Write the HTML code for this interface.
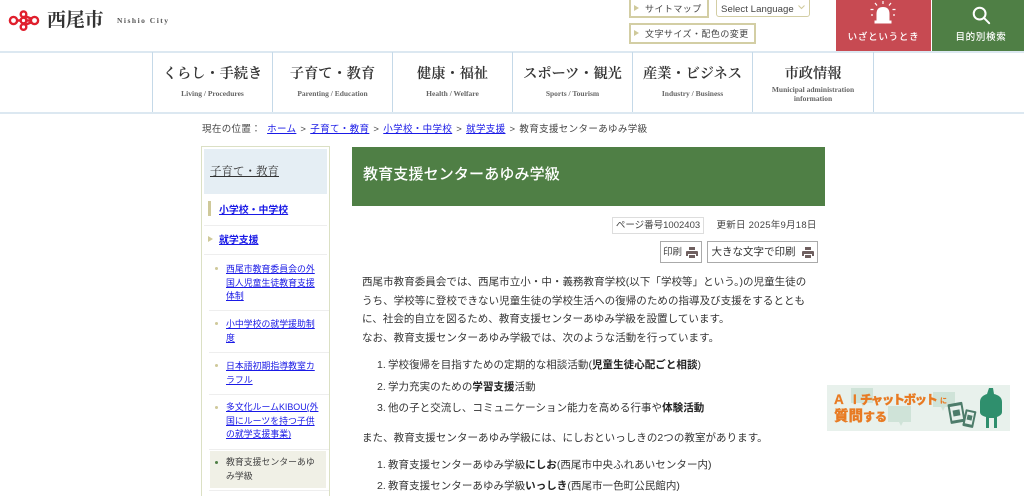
<!DOCTYPE html>
<html lang="ja"><head><meta charset="utf-8"><title>教育支援センターあゆみ学級</title>
<style>
html,body{margin:0;padding:0;background:#fff}
body{width:1024px;height:496px;overflow:hidden;position:relative;font-family:"Liberation Sans","Noto Sans CJK JP",sans-serif;color:#333}
#w{position:absolute;left:0;top:0;width:1024px;height:496px;overflow:hidden;filter:blur(.3px)}
.a{position:absolute;white-space:nowrap}
.serif{font-family:"Liberation Serif","Noto Serif CJK JP",serif}
.nav{position:absolute;top:52px;height:60px;text-align:center;border-right:1px solid #c5d9e8;box-sizing:border-box;color:#333}
.nav b{display:block;font-weight:600;font-size:14.2px;position:absolute;left:0;right:0;top:11px;line-height:22px;white-space:nowrap;-webkit-text-stroke:.1px #333}
.nav i{display:block;font-style:normal;font-size:7.5px;position:absolute;left:0;right:0;top:36px;line-height:12px;font-weight:700;color:#666}
.btn{position:absolute;box-sizing:border-box;border:2px solid #d3cea4;background:#fff;font-size:9px;color:#444;letter-spacing:.45px;white-space:nowrap;line-height:16px}
.tri{position:absolute;width:0;height:0;border-left:5px solid #cfc99a;border-top:3px solid transparent;border-bottom:3px solid transparent}
a{color:#1a1ae6}
.sep{margin:0 1px}
.sd{position:absolute;left:201px;top:146px;width:129px;height:360px;box-sizing:border-box;border:1px solid #dbe0c4;border-bottom:0}
.l{position:absolute;left:226px;white-space:nowrap;font-size:8.9px;line-height:13.7px}
.dot{position:absolute;left:215px;width:3px;height:3px;background:#cfc99a;border-radius:50%}
.hr{position:absolute;left:209px;width:120px;height:1px;background:#eee}
.p{position:absolute;left:362px;font-size:10.5px;line-height:19px;white-space:nowrap;color:#333;letter-spacing:.05px}
.n{position:absolute;left:377px;font-size:10.5px;line-height:19px;color:#333}
.p b{color:#222}
.li{left:388px}
</style></head><body><div id="w">
<svg class="a" style="left:8px;top:10px" width="32" height="22" viewBox="0 0 32 22" fill="none" stroke="#e01f2d" stroke-width="2.4">
<circle cx="5.500" cy="10.500" r="3.600"/><circle cx="26.500" cy="10.500" r="3.600"/><circle cx="15.500" cy="4.200" r="2.800"/><circle cx="15.500" cy="17" r="2.800"/><circle cx="15.500" cy="10.500" r="2.800"/><path d="M9 10.500H13M18 10.500H23M18 6.500L23 8.500M18 14.500L23 12.500"/></svg>
<div class="a serif" style="left:47px;top:8px;font-size:19px;line-height:26px;font-weight:700;color:#333;letter-spacing:-.2px">西尾市</div>
<div class="a serif" style="left:117px;top:15px;font-size:7.500px;line-height:12px;font-weight:700;color:#555;letter-spacing:1.5px">Nishio City</div>

<div class="btn" style="left:629px;top:-3px;width:80px;height:21px;padding:2px 0 0 14px"><span class="tri" style="left:3px;top:6px"></span>サイトマップ</div>
<div class="btn" style="left:716px;top:-3px;width:94px;height:20px;border-radius:3px;padding:4px 0 0 4px;letter-spacing:.05px;font-size:9.600px;border-width:1.500px">Select Language
<svg class="a" style="left:81px;top:7px" width="7" height="5" viewBox="0 0 7 5" fill="none" stroke="#cfc99a" stroke-width="1"><path d="M.5 .5L3.500 3.500L6.500 .5"/></svg></div>
<div class="btn" style="left:629px;top:23px;width:127px;height:21px;padding:.5px 0 0 14px"><span class="tri" style="left:3px;top:5px"></span>文字サイズ・配色の変更</div>

<div class="a" style="left:836px;top:0;width:95px;height:51px;background:#c74a52"></div>
<svg class="a" style="left:869px;top:0" width="28" height="25" viewBox="0 0 28 25" fill="#fff" stroke="#fff">
<path d="M7.500 23V14C7.500 9 10 7 14 7C18 7 20.500 9 20.500 14V23Z" stroke="none"/><rect x="5.500" y="20.500" width="17" height="3" stroke="none"/>
<path d="M14 1V4M6 3L8 5.500M22 3L20 5.500M1.500 9.500H4.500M23.500 9.500H26.500M2 15H4M24 15H26" stroke-width="1.200" fill="none"/></svg>
<div class="a" style="left:836px;top:30px;width:95px;text-align:center;color:#fff;font-size:9.500px;line-height:16px;letter-spacing:.75px;font-weight:500">いざというとき</div>
<div class="a" style="left:932px;top:0;width:92px;height:51px;background:#4f7f45"></div>
<svg class="a" style="left:971px;top:5px" width="20" height="20" viewBox="0 0 22 22" fill="none" stroke="#fff" stroke-width="2.200"><circle cx="9.500" cy="9.500" r="6.500"/><path d="M14 14L20 20" stroke-linecap="round"/></svg>
<div class="a" style="left:938px;top:30px;width:86px;text-align:center;color:#fff;font-size:9.500px;line-height:16px;letter-spacing:.7px;font-weight:500">目的別検索</div>

<div class="a" style="left:0;top:51px;width:1024px;height:1.500px;background:#dce8f1"></div>
<div class="a" style="left:0;top:112px;width:1024px;height:1.500px;background:#dce8f1"></div>
<div class="a" style="left:152px;top:52px;width:1px;height:60px;background:#c5d9e8"></div>
<div class="nav serif" style="left:153px;width:120px"><b>くらし・手続き</b><i>Living / Procedures</i></div>
<div class="nav serif" style="left:273px;width:120px"><b>子育て・教育</b><i>Parenting / Education</i></div>
<div class="nav serif" style="left:393px;width:120px"><b>健康・福祉</b><i>Health / Welfare</i></div>
<div class="nav serif" style="left:513px;width:120px"><b>スポーツ・観光</b><i>Sports / Tourism</i></div>
<div class="nav serif" style="left:633px;width:120px"><b>産業・ビジネス</b><i>Industry / Business</i></div>
<div class="nav serif" style="left:753px;width:121px"><b>市政情報</b><i style="top:32.500px;line-height:9.700px;white-space:nowrap">Municipal administration<br>information</i></div>

<div class="a" style="left:202px;top:123px;font-size:9.500px;line-height:14px;color:#444;letter-spacing:.35px">現在の位置： <span style="margin-left:3px"><a href="#">ホーム</a><span class="sep"> &gt; </span><a href="#">子育て・教育</a><span class="sep"> &gt; </span><a href="#">小学校・中学校</a><span class="sep"> &gt; </span><a href="#">就学支援</a><span class="sep"> &gt; </span>教育支援センターあゆみ学級</span></div>

<div class="sd"></div>
<div class="a" style="left:204px;top:149px;width:123px;height:45px;background:#e5eef4"></div>
<div class="a serif" style="left:210px;top:163px;font-size:11.500px;line-height:18px;color:#333;text-decoration:underline">子育て・教育</div>
<div class="a" style="left:208px;top:201px;width:3px;height:15px;background:#cfc99a"></div>
<div class="a" style="left:219px;top:204px;font-size:9.900px;line-height:14px;font-weight:700"><a href="#">小学校・中学校</a></div>
<div class="hr" style="left:204px;width:123px;top:225px"></div>
<div class="tri" style="left:208px;top:236px;border-left-width:5px"></div>
<div class="a" style="left:219px;top:234px;font-size:9.900px;line-height:14px;font-weight:700"><a href="#">就学支援</a></div>
<div class="hr" style="left:204px;width:123px;top:254px"></div>
<div class="dot" style="top:267px"></div><div class="l" style="top:263px"><a href="#">西尾市教育委員会の外<br>国人児童生徒教育支援<br>体制</a></div>
<div class="hr" style="top:310px"></div>
<div class="dot" style="top:322px"></div><div class="l" style="top:318px"><a href="#">小中学校の就学援助制<br>度</a></div>
<div class="hr" style="top:352px"></div>
<div class="dot" style="top:364px"></div><div class="l" style="top:360px"><a href="#">日本語初期指導教室カ<br>ラフル</a></div>
<div class="hr" style="top:394px"></div>
<div class="dot" style="top:406px"></div><div class="l" style="top:401px"><a href="#">多文化ルームKIBOU(外<br>国にルーツを持つ子供<br>の就学支援事業)</a></div>
<div class="hr" style="top:449px"></div>
<div class="a" style="left:210px;top:451px;width:116px;height:37px;background:#f0f0e6"></div>
<div class="dot" style="top:461px;background:#4f7f45"></div><div class="l" style="top:456px;color:#444">教育支援センターあゆ<br>み学級</div>
<div class="hr" style="top:490px"></div>

<div class="a" style="left:352px;top:147px;width:473px;height:59px;background:#4f7f45"></div>
<div class="a" style="left:363px;top:164px;font-size:15px;line-height:22px;color:#fff;font-weight:500;letter-spacing:.15px">教育支援センターあゆみ学級</div>

<div class="a" style="left:612px;top:217px;width:92px;height:17px;box-sizing:border-box;border:1px solid #ddd;font-size:9.500px;line-height:15px;text-align:center;color:#444">ページ番号1002403</div>
<div class="a" style="left:716.500px;top:218.500px;font-size:9.500px;line-height:14px;color:#444;letter-spacing:.25px">更新日 2025年9月18日</div>
<div class="a" style="left:660px;top:241px;width:42px;height:22px;box-sizing:border-box;border:1px solid #aaa;font-size:9.500px;line-height:22px;padding-left:2px;color:#444">印刷</div>
<div class="a" style="left:707px;top:241px;width:111px;height:22px;box-sizing:border-box;border:1px solid #aaa;font-size:10.500px;line-height:21px;padding-left:3.500px;color:#333">大きな文字で印刷</div>
<svg class="a" style="left:686px;top:247px" width="12" height="11" viewBox="0 0 12 11" fill="#6e5f5f"><path d="M3 0H9V3H3ZM1 4H11Q12 4 12 5V9H10V7H2V9H0V5Q0 4 1 4ZM3 8H9V11H3Z"/></svg>
<svg class="a" style="left:802px;top:247px" width="12" height="11" viewBox="0 0 12 11" fill="#6e5f5f"><path d="M3 0H9V3H3ZM1 4H11Q12 4 12 5V9H10V7H2V9H0V5Q0 4 1 4ZM3 8H9V11H3Z"/></svg>

<div class="p" style="top:273px">西尾市教育委員会では、西尾市立小・中・義務教育学校(以下「学校等」という。)の児童生徒の</div>
<div class="p" style="top:291.500px">うち、学校等に登校できない児童生徒の学校生活への復帰のための指導及び支援をするととも</div>
<div class="p" style="top:310px">に、社会的自立を図るため、教育支援センターあゆみ学級を設置しています。</div>
<div class="p" style="top:329px">なお、教育支援センターあゆみ学級では、次のような活動を行っています。</div>
<div class="n" style="top:356px">1.</div><div class="p li" style="top:356px">学校復帰を目指すための定期的な相談活動(<b>児童生徒心配ごと相談</b>)</div>
<div class="n" style="top:377.500px">2.</div><div class="p li" style="top:377.500px">学力充実のための<b>学習支援</b>活動</div>
<div class="n" style="top:398.500px">3.</div><div class="p li" style="top:398.500px">他の子と交流し、コミュニケーション能力を高める行事や<b>体験活動</b></div>
<div class="p" style="top:428.500px">また、教育支援センターあゆみ学級には、にしおといっしきの2つの教室があります。</div>
<div class="n" style="top:456px">1.</div><div class="p li" style="top:456px">教育支援センターあゆみ学級<b>にしお</b>(西尾市中央ふれあいセンター内)</div>
<div class="n" style="top:476.500px">2.</div><div class="p li" style="top:476.500px">教育支援センターあゆみ学級<b>いっしき</b>(西尾市一色町公民館内)</div>

<div class="a" style="left:827px;top:385px;width:183px;height:46px;background:#e8f1ec"></div>
<svg class="a" style="left:827px;top:385px" width="183" height="46" viewBox="0 0 183 46">
<path d="M24 3H46V18H38L36 22L34 18H24ZM106 7H128V22H118L116 26L114 22H106ZM61 21H84V37H76L74 41L72 37H61Z" fill="#cfe3d8"/>
<g transform="rotate(-10 129 28)"><rect x="122" y="18" width="15" height="20" rx="1" fill="#4d7c6a"/><rect x="124" y="21" width="11" height="14" fill="#e8f1ec"/><rect x="126" y="25" width="7" height="6" fill="#4d7c6a"/></g>
<g transform="rotate(12 142 33)"><rect x="137" y="25" width="11" height="17" rx="1" fill="#4d7c6a"/><rect x="139" y="27" width="7" height="12" fill="#e8f1ec"/><rect x="140" y="30" width="5" height="5" fill="#4d7c6a"/></g>
<path d="M153 17C153 12 157 10 160 9L162 3H166L167 9C171 10 175 12 175 17V27C175 30 172 31 170 32V43H167V33H162V43H159V32C156 31 153 30 153 27Z" fill="#2f8f6d"/>
<g font-family="Liberation Sans,Noto Sans CJK JP,sans-serif" font-weight="900" fill="#e87a22" stroke="#e87a22" stroke-width=".25">
<text x="7" y="19" font-size="13.500">A</text><text x="26" y="19" font-size="13.500">I</text>
<text x="33" y="19" textLength="78" lengthAdjust="spacing" font-size="12.500">チャットボット</text>
<text x="113" y="18" font-size="7" stroke="none">に</text>
<text x="7" y="36" font-size="14.500">質問<tspan font-size="12">する</tspan></text></g>
</svg>
</div></body></html>
